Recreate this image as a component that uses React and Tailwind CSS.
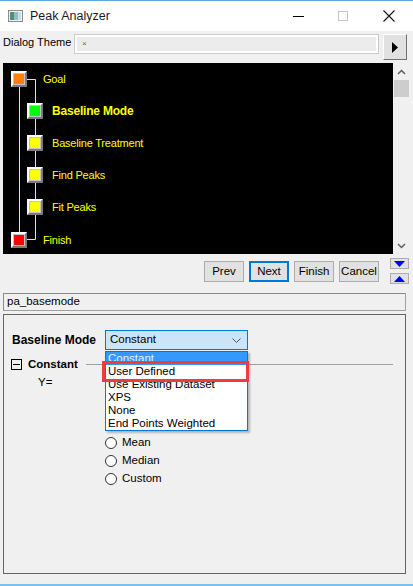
import React from 'react';

const TreeBox = ({ fill }) => (
  <div className="relative z-10 w-[16px] h-[16px] shrink-0 bg-[#c4c4c4] border-2 border-t-white border-l-white border-b-[#7a7a7a] border-r-[#7a7a7a] p-[1px]">
    <div className={`w-full h-full ${fill}`} />
  </div>
);

const WinButton = ({ label, active }) => (
  <button
    type="button"
    className={`w-[40px] h-[21px] bg-[#e1e1e1] text-[11.5px] text-black leading-none flex items-center justify-center ${
      active ? 'border-2 border-[#0078d7]' : 'border border-[#adadad]'
    }`}
  >
    {label}
  </button>
);

const Radio = ({ label }) => (
  <div className="flex items-center h-[18px]">
    <span className="w-[12px] h-[12px] rounded-full border border-[#333333] bg-white" />
    <span className="ml-[5px] text-[11.5px] text-black">{label}</span>
  </div>
);

const options = ['Constant', 'User Defined', 'Use Existing Dataset', 'XPS', 'None', 'End Points Weighted'];

export default function App() {
  return (
    <div className="w-[413px] h-[586px] bg-[#f0f0f0] overflow-hidden font-['Liberation_Sans',Arial,sans-serif] text-black">
      {/* title bar */}
      <div className="h-[31px] bg-white border-t border-[#5ea7dc] flex items-center">
        <svg className="ml-[8px]" width="15" height="12" viewBox="0 0 15 12">
          <rect x="0.5" y="0.5" width="14" height="11" fill="#f4f4f4" stroke="#8a8a8a" />
          <rect x="2" y="2" width="4" height="8" fill="#4f8f7a" />
          <rect x="6" y="2" width="4" height="8" fill="#8fc0c8" />
          <rect x="10" y="2" width="3" height="8" fill="#c8dde6" />
        </svg>
        <span className="ml-[7px] text-[12.5px] text-[#1a1a1a]">Peak Analyzer</span>
        <div className="ml-auto flex items-center mr-[18px]">
          <span className="w-[11px] h-px bg-black" />
          <span className="ml-[34px] w-[10px] h-[10px] border border-[#c6c6c6]" />
          <svg className="ml-[35px]" width="12" height="12" viewBox="0 0 12 12">
            <path d="M0.5 0.5 L11.5 11.5 M11.5 0.5 L0.5 11.5" stroke="#111" strokeWidth="1.1" />
          </svg>
        </div>
      </div>

      {/* dialog theme row */}
      <div className="mt-[3px] h-[26px] flex items-start">
        <span className="ml-[3px] w-[65px] mt-[1px] whitespace-nowrap text-[11px] leading-[14px]">Dialog Theme</span>
        <div className="ml-[6px] w-[305px] h-[20px] border border-[#cccccc] bg-white p-[2px]">
          <div className="w-full h-full bg-[#ececec] flex items-center pl-[5px]">
            <span className="text-[8px] text-[#666666] leading-none">×</span>
          </div>
        </div>
        <button
          type="button"
          className="ml-[4px] w-[24px] h-[26px] bg-[#e1e1e1] border border-t-white border-l-white border-b-[#707070] border-r-[#707070] flex items-center justify-center"
        >
          <svg width="6" height="11" viewBox="0 0 6 11">
            <path d="M0 0 L6 5.5 L0 11 Z" fill="#000" />
          </svg>
        </button>
      </div>

      {/* tree panel */}
      <div className="mt-[3px] ml-[3px] w-[407px] h-[191px] flex">
        <div className="relative w-[390px] h-full bg-black">
          <svg className="absolute inset-0" width="390" height="191">
            <path d="M16.5 24 V169" stroke="#ffff00" fill="none" />
            <path d="M24 16.5 H32.5 V176.5 H24" stroke="#ffff00" fill="none" />
          </svg>
          <div className="relative flex flex-col pt-[8px] text-[#ffff00] text-[11px] tracking-[-0.2px]">
            <div className="flex items-center h-[16px]">
              <div className="ml-[8px]"><TreeBox fill="bg-[#ff8000]" /></div>
              <span className="ml-[16px]">Goal</span>
            </div>
            <div className="flex items-center h-[16px] mt-[16px]">
              <div className="ml-[24px]"><TreeBox fill="bg-[#00ff00]" /></div>
              <span className="ml-[9px] font-bold text-[12px] tracking-[-0.2px]">Baseline Mode</span>
            </div>
            <div className="flex items-center h-[16px] mt-[16px]">
              <div className="ml-[24px]"><TreeBox fill="bg-[#ffff00]" /></div>
              <span className="ml-[9px]">Baseline Treatment</span>
            </div>
            <div className="flex items-center h-[16px] mt-[16px]">
              <div className="ml-[24px]"><TreeBox fill="bg-[#ffff00]" /></div>
              <span className="ml-[9px]">Find Peaks</span>
            </div>
            <div className="flex items-center h-[16px] mt-[16px]">
              <div className="ml-[24px]"><TreeBox fill="bg-[#ffff00]" /></div>
              <span className="ml-[9px]">Fit Peaks</span>
            </div>
            <div className="flex items-center h-[16px] mt-[17px]">
              <div className="ml-[8px]"><TreeBox fill="bg-[#ff0000]" /></div>
              <span className="ml-[16px]">Finish</span>
            </div>
          </div>
        </div>
        <div className="w-[17px] h-full bg-[#f0f0f0] flex flex-col">
          <div className="h-[17px] flex items-center justify-center">
            <svg width="9" height="6" viewBox="0 0 9 6">
              <path d="M1 5 L4.5 1.5 L8 5" stroke="#606060" strokeWidth="1.5" fill="none" />
            </svg>
          </div>
          <div className="ml-[1px] w-[15px] h-[17px] bg-[#cdcdcd]" />
          <div className="flex-1" />
          <div className="h-[17px] flex items-center justify-center">
            <svg width="9" height="6" viewBox="0 0 9 6">
              <path d="M1 1 L4.5 4.5 L8 1" stroke="#606060" strokeWidth="1.5" fill="none" />
            </svg>
          </div>
        </div>
      </div>

      {/* wizard buttons */}
      <div className="mt-[4px] h-[26px] flex items-start">
        <div className="ml-[204px] mt-[3px] flex gap-[5px]">
          <WinButton label="Prev" />
          <WinButton label="Next" active />
          <WinButton label="Finish" />
          <WinButton label="Cancel" />
        </div>
        <div className="ml-[11px] flex flex-col gap-[4px]">
          <button type="button" className="w-[19px] h-[11px] bg-[#e1e1e1] border border-[#adadad] flex items-center justify-center">
            <svg width="11" height="6" viewBox="0 0 11 6">
              <path d="M0 0 H11 L5.5 6 Z" fill="#0000ff" />
            </svg>
          </button>
          <button type="button" className="w-[19px] h-[11px] bg-[#e1e1e1] border border-[#adadad] flex items-center justify-center">
            <svg width="11" height="6" viewBox="0 0 11 6">
              <path d="M0 6 H11 L5.5 0 Z" fill="#0000ff" />
            </svg>
          </button>
        </div>
      </div>

      {/* page name */}
      <div className="mt-[9px] ml-[3px] w-[403px] h-[18px] border border-[#a0a0a0] border-t-[#8a8a8a] border-l-[#8a8a8a] flex items-center pl-[3px]">
        <span className="text-[11.5px]">pa_basemode</span>
      </div>

      {/* settings panel */}
      <div className="mt-[3px] ml-[3px] w-[403px] h-[260px] border border-[#646464] relative">
        <div className="pt-[15px] flex items-center h-[35px]">
          <span className="ml-[8px] w-[93px] text-[12px] font-bold">Baseline Mode</span>
          <div className="w-[143px] h-[20px] border border-[#0078d7] bg-[#cce4f7] flex items-center pl-[4px] pr-[6px]">
            <span className="text-[11.5px]">Constant</span>
            <svg className="ml-auto" width="9" height="5" viewBox="0 0 9 5">
              <path d="M0.5 0.5 L4.5 4.5 L8.5 0.5" stroke="#555" fill="none" />
            </svg>
          </div>
        </div>

        <div className="mt-[9px] flex items-center h-[11px]">
          <span className="ml-[7px] w-[11px] h-[11px] border border-black bg-[#f0f0f0] flex items-center justify-center">
            <span className="w-[7px] h-px bg-black" />
          </span>
          <span className="ml-[6px] text-[11.5px] font-bold">Constant</span>
          <span className="ml-[8px] flex-1 mr-[12px] h-px bg-[#a0a0a0]" />
        </div>

        <div className="mt-[6px] h-[14px] flex items-center">
          <span className="ml-[34px] text-[11.5px]">Y=</span>
        </div>

        <div className="mt-[44px] ml-[101px] flex flex-col">
          <Radio label="Mean" />
          <Radio label="Median" />
          <Radio label="Custom" />
        </div>

        {/* open dropdown */}
        <div className="absolute left-[101px] top-[36px] w-[143px] h-[80px] border border-[#0078d7] bg-white shadow-[2px_2px_2px_rgba(0,0,0,0.25)] z-20">
          {options.map((o, i) => (
            <div
              key={o}
              className={`h-[13px] flex items-center pl-[2px] text-[11.5px] leading-none ${
                i === 0 ? 'bg-[#3399ff] text-[#e6f2ff]' : 'text-black'
              }`}
            >
              {o}
            </div>
          ))}
        </div>
        <div className="absolute left-[98px] top-[46px] w-[147px] h-[21px] border-[3px] border-[#f03c3c] z-30" />
      </div>

      <div className="mt-[10px] h-[2px] bg-[#7cc1ea]" />
    </div>
  );
}
